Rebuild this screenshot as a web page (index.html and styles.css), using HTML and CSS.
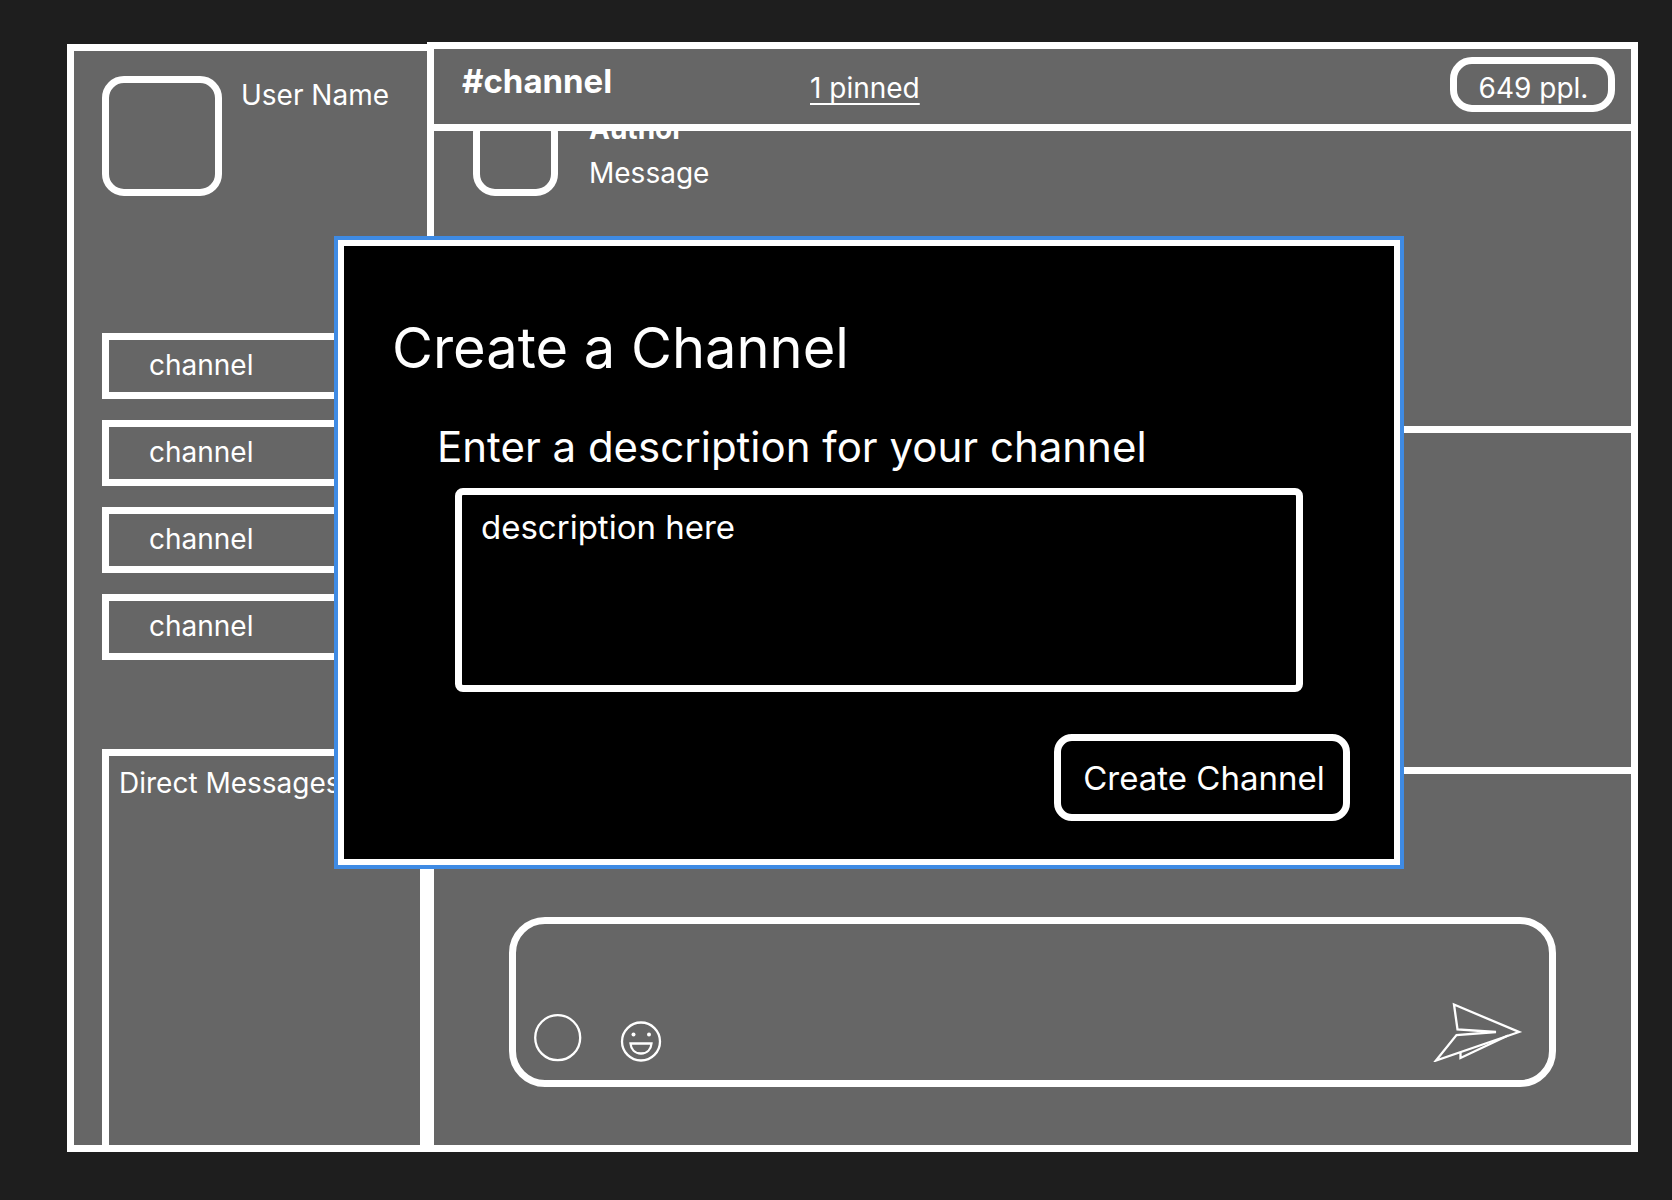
FILE: index.html
```html
<!DOCTYPE html>
<html lang="en">
<head>
<meta charset="utf-8">
<meta name="viewport" content="width=device-width, initial-scale=1">
<title>Create a Channel</title>
<link rel="stylesheet" href="styles.css">
</head>
<body>
<div class="app">
  <aside class="sidebar">
    <div class="profile">
      <div class="avatar avatar-large"></div>
      <span class="user-name">User Name</span>
    </div>
    <nav class="channels" aria-label="Channels">
      <a class="channel" href="#">channel</a>
      <a class="channel" href="#">channel</a>
      <a class="channel" href="#">channel</a>
      <a class="channel" href="#">channel</a>
    </nav>
    <section class="direct">
      <h2 class="direct-title">Direct Messages</h2>
    </section>
  </aside>

  <main class="main">
    <header class="topbar">
      <h1 class="channel-name">#channel</h1>
      <a class="pinned" href="#">1 pinned</a>
      <button class="members" type="button">649 ppl.</button>
    </header>
    <div class="messages">
      <article class="message">
        <div class="avatar"></div>
        <div class="message-body">
          <h3 class="author">Author</h3>
          <p class="text">Message</p>
        </div>
      </article>
      <article class="message"></article>
      <article class="message"></article>
    </div>
    <form class="composer">
      <textarea class="composer-input" aria-label="Write a message"></textarea>
      <div class="composer-tools">
        <button class="tool" type="button" aria-label="Attach">
          <svg width="48" height="48" viewBox="0 0 48 48"><circle cx="23.700" cy="23.700" r="22.500"/></svg>
        </button>
        <button class="tool" type="button" aria-label="Emoji">
          <svg width="42" height="42" viewBox="0 0 42 42"><circle cx="21" cy="21.500" r="19"/><circle class="dot" cx="13.500" cy="14.500" r="2"/><circle class="dot" cx="29" cy="14.500" r="2"/><path d="M10.500 23.500H31.500C31 29.500 27 33.500 21 33.500S11 29.500 10.500 23.500Z"/></svg>
        </button>
        <button class="tool tool-send" type="button" aria-label="Send">
          <svg width="92" height="62" viewBox="0 0 92 62"><path d="M22 4.500 87 32 4 60.500 24.500 35 64 32 25.500 29.500Z"/><path d="M28.500 52.500V58L76 35.500"/></svg>
        </button>
      </div>
    </form>
  </main>

  <dialog class="modal" open aria-labelledby="modal-title">
    <form class="modal-form">
      <h2 class="modal-title" id="modal-title">Create a Channel</h2>
      <label class="modal-label" for="description">Enter a description for your channel</label>
      <textarea class="modal-input" id="description">description here</textarea>
      <button class="modal-submit" type="button">Create Channel</button>
    </form>
  </dialog>
</div>
</body>
</html>
```
FILE: styles.css
```css
:root {
  --line: 7px;
  --panel: #666;
  --ink: #fff;
}

* {
  box-sizing: border-box;
}

body {
  margin: 0;
  min-height: 100vh;
  display: flex;
  padding: 42px 34px 48px 67px;
  background: #1e1e1e;
  color: var(--ink);
  font: 28px/34px Inter, "Liberation Sans", sans-serif;
}

h1, h2, h3, p {
  margin: 0;
  font-size: inherit;
  font-weight: 400;
}

a {
  color: inherit;
  text-decoration: none;
}

button, textarea {
  margin: 0;
  padding: 0;
  border: 0;
  background: none;
  color: inherit;
  font: inherit;
  resize: none;
  overflow: hidden;
}

.app {
  position: relative;
  flex: 1;
  display: flex;
  min-width: 0;
}

/* Sidebar */

.sidebar {
  flex: 0 0 360px;
  display: flex;
  flex-direction: column;
  margin-top: 2px;
  padding: 25px 0 0 28px;
  border: var(--line) solid var(--ink);
  border-right: 0;
  background: var(--panel);
}

.profile {
  display: flex;
  gap: 19px;
}

.avatar {
  flex: none;
  width: 85px;
  height: 85px;
  border: var(--line) solid var(--ink);
  border-radius: 22px;
}

.avatar-large {
  width: 120px;
  height: 120px;
}

.user-name {
  margin-top: 2px;
}

.channels {
  display: flex;
  flex-direction: column;
  gap: 21px;
  margin: 137px 36px 89px 0;
}

.channel {
  padding: 8px 40px 10px;
  border: var(--line) solid var(--ink);
}

.direct {
  flex: 1;
  padding: 10px;
  border: var(--line) solid var(--ink);
  border-bottom: 0;
}

/* Conversation */

.main {
  flex: 1;
  display: flex;
  flex-direction: column;
  min-width: 0;
  border: var(--line) solid var(--ink);
  background: var(--panel);
}

.topbar {
  display: grid;
  grid-template-columns: 345px 1fr auto;
  align-items: start;
  padding: 8px 16px 12px 28px;
  border-bottom: var(--line) solid var(--ink);
}

.channel-name {
  margin-top: 7px;
  font-size: 33px;
  font-weight: 700;
}

.pinned {
  justify-self: start;
  margin-top: 14px;
  margin-left: 3px;
  text-decoration: underline;
  text-decoration-thickness: 2px;
  text-underline-offset: 5px;
  text-decoration-skip-ink: none;
}

.members {
  width: 165px;
  height: 55px;
  padding: 6px 0 0 2px;
  border: var(--line) solid var(--ink);
  border-radius: 22px;
}

.messages {
  flex: 1;
  overflow: hidden;
}

.message {
  display: flex;
  gap: 31px;
  height: 341px;
  padding: 19px 39px;
  border-bottom: var(--line) solid var(--ink);
}

/* The list is scrolled part of the way past its first message */
.message:first-child {
  margin-top: -39px;
}

.message:last-child {
  height: auto;
  border-bottom: 0;
}

.message-body {
  display: flex;
  flex-direction: column;
  gap: 10px;
  padding-top: 1px;
}

.author {
  font-weight: 700;
}

.composer {
  display: flex;
  flex-direction: column;
  height: 170px;
  margin: 0 75px 58px;
  padding: 0 25px 18px 18px;
  border: var(--line) solid var(--ink);
  border-radius: 36px;
}

.composer-input {
  flex: 1;
  min-height: 0;
}

.composer-tools {
  display: flex;
  align-items: flex-end;
  gap: 38px;
}

.tool svg {
  display: block;
  fill: none;
  stroke: var(--ink);
  stroke-width: 2.3;
}

.tool .dot {
  fill: var(--ink);
  stroke: none;
}

.tool-send {
  margin-left: auto;
}

/* Dialog over the conversation */

.modal {
  position: absolute;
  inset: 194px 234px auto 267px;
  width: auto;
  max-width: none;
  margin: 0;
  padding: 0;
  border: 4px solid #3f8be4;
  background: #000;
  color: inherit;
}

.modal-form {
  display: flex;
  flex-direction: column;
  padding: 68px 44px 38px;
  border: 6px solid var(--ink);
}

.modal-title {
  padding-left: 4px;
  font-size: 56px;
  line-height: 68px;
}

.modal-label {
  margin: 40px 0 16px 49px;
  font-size: 42px;
  line-height: 50px;
}

.modal-input {
  height: 204px;
  margin: 0 47px 42px 67px;
  padding: 12px 19px;
  border: var(--line) solid var(--ink);
  border-radius: 8px;
  font-size: 33px;
  line-height: 40px;
}

.modal-submit {
  align-self: flex-end;
  width: 296px;
  height: 87px;
  padding-left: 4px;
  border: var(--line) solid var(--ink);
  border-radius: 18px;
  font-size: 33px;
}
```
